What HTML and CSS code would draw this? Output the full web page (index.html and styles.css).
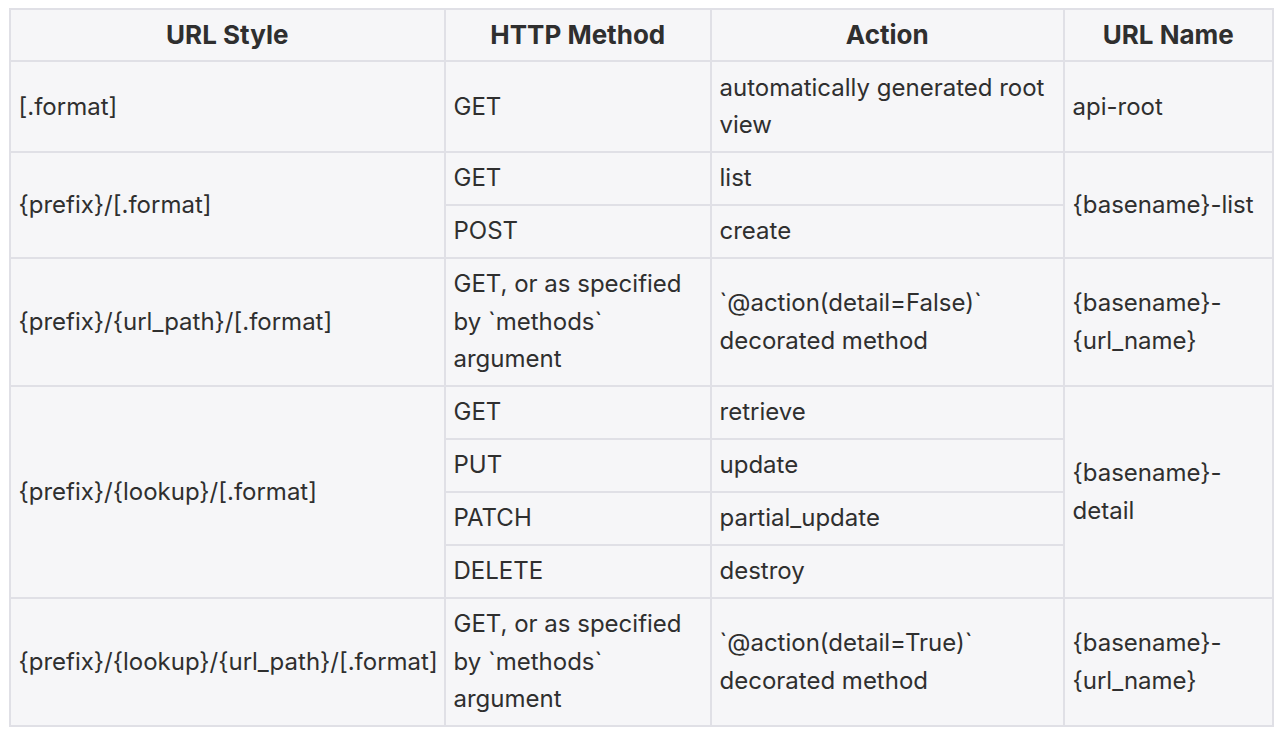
FILE: index.html
```html
<!DOCTYPE html>
<html>
<head>
<meta charset="utf-8">
<link rel="stylesheet" href="styles.css">
</head>
<body>
<table class="routes">
  <colgroup>
    <col class="c1"><col class="c2"><col class="c3"><col class="c4">
  </colgroup>
  <thead>
    <tr><th>URL Style</th><th>HTTP Method</th><th>Action</th><th>URL Name</th></tr>
  </thead>
  <tbody>
    <tr><td>[.format]</td><td>GET</td><td>automatically generated root view</td><td>api-root</td></tr>
    <tr><td rowspan="2">{prefix}/[.format]</td><td>GET</td><td>list</td><td rowspan="2">{basename}-list</td></tr>
    <tr><td>POST</td><td>create</td></tr>
    <tr><td>{prefix}/{url_path}/[.format]</td><td>GET, or as specified by `methods` argument</td><td>`@action(detail=False)` decorated method</td><td>{basename}-{url_name}</td></tr>
    <tr><td rowspan="4">{prefix}/{lookup}/[.format]</td><td>GET</td><td>retrieve</td><td rowspan="4">{basename}-detail</td></tr>
    <tr><td>PUT</td><td>update</td></tr>
    <tr><td>PATCH</td><td>partial_update</td></tr>
    <tr><td>DELETE</td><td>destroy</td></tr>
    <tr><td>{prefix}/{lookup}/{url_path}/[.format]</td><td>GET, or as specified by `methods` argument</td><td>`@action(detail=True)` decorated method</td><td>{basename}-{url_name}</td></tr>
  </tbody>
</table>
</body>
</html>
```
FILE: styles.css
```css
html, body {
  margin: 0;
  padding: 0;
  background: #ffffff;
}
body {
  padding: 8px 0 0 9px;
}
.routes {
  border-collapse: collapse;
  table-layout: fixed;
  width: 1263px;
  font-family: Inter, "Liberation Sans", sans-serif;
  font-size: 24px;
  line-height: 37.5px;
  color: #2f2f2f;
  border: 2px solid #dcdce3;
}
.c1 { width: 435px; }
.c2 { width: 266px; }
.c3 { width: 353px; }
.c4 { width: 209px; }
.routes th, .routes td {
  border: 2px solid #e0e0e6;
  background: #f6f6f8;
  padding: 6.75px 8px 6.75px 7.5px;
  vertical-align: middle;
  text-align: left;
}
.routes th {
  font-weight: 700;
  font-size: 26px;
  line-height: 36px;
  padding-top: 7px;
  padding-bottom: 7px;
  text-align: center;
}
.routes td:first-child {
  white-space: nowrap;
}
```
